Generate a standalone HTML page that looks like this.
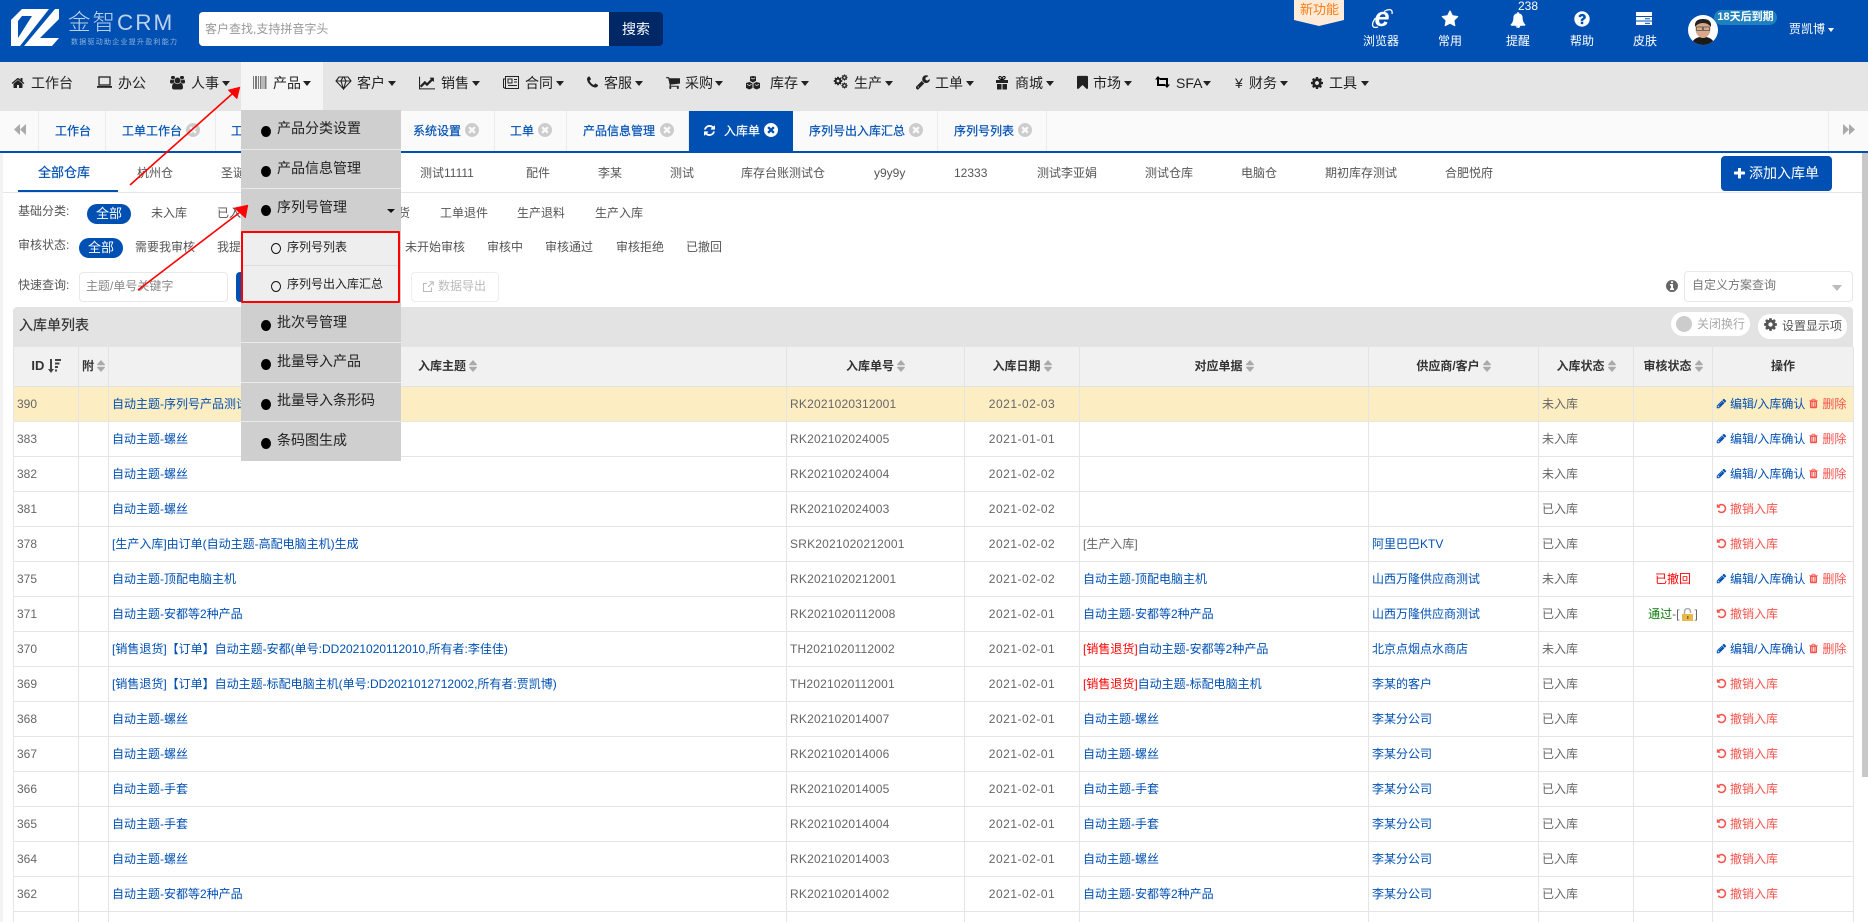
<!DOCTYPE html>
<html lang="zh"><head><meta charset="utf-8"><title>入库单</title>
<style>
*{margin:0;padding:0;box-sizing:border-box}
html,body{width:1868px;height:922px;overflow:hidden}
body{position:relative;background:#fff;font:12px/16px "Liberation Sans","Noto Sans CJK SC",sans-serif;color:#666}
.a,.r>*{position:absolute;white-space:nowrap}
.r{position:absolute;left:0;width:1868px;height:16px}
svg{fill:currentColor}
.nav{color:#222;font-size:14px;line-height:20px;height:20px}
.nav svg{top:3px}
.nav i{top:8px;border-top:5px solid #222;border-left:4px solid transparent;border-right:4px solid transparent}
.tab{position:absolute;top:111px;height:40px;border-right:1px solid #ececec}
.tt{color:#0050b3;-webkit-text-stroke:.2px #0050b3}
.tt svg{top:0;color:#ccc}
.wh{color:#555}
.pill{background:#0050b3;color:#fff;border-radius:10px;text-align:center;height:20px;line-height:19px;font-size:13px}
.hic{color:#fff}
.hic span{font-size:12px}
table{position:absolute;left:13px;top:347px;width:1840px;border-collapse:collapse;table-layout:fixed;color:#666}
th{height:39px;background:#f1f1f1;border:1px solid #e3e3e3;border-top:0;color:#333;font-size:12px;font-weight:700;white-space:nowrap}
th svg{width:8px;height:12px;vertical-align:-2px;margin-left:3px;color:#aaa}
td{height:35px;border:1px solid #e5e5e5;padding:0 3px;white-space:nowrap;overflow:hidden}
tr.h td{background:#fdedc2}
b{font-weight:400;color:#0050b3}
u{text-decoration:none;color:#f00}
em{font-style:normal;color:#f5544d}
.ed svg,.un svg{width:11px;height:11px;vertical-align:-1px;margin-right:3px}
.ed svg{color:#0050b3}
.ed .tr{color:#f5544d;width:11px;margin:0 3px 0 3px}
.un svg{color:#f5544d}
.rk{letter-spacing:.2px}
.dt{text-align:center;letter-spacing:.5px}
.mi{position:absolute;left:36px;font-size:14px;line-height:20px;color:#222;white-space:nowrap}
.dot{position:absolute;left:20px;width:10px;height:11px;border-radius:50%;background:#000}
.sp{position:absolute;left:0;width:160px;height:1px;background:#e9e9e9}
</style></head><body>
<svg width="0" height="0" style="position:absolute"><defs>
<symbol id="home" viewBox="0 0 1792 1792"><path d="M1472 992v480q0 26-19 45t-45 19h-384v-384h-256v384h-384q-26 0-45-19t-19-45v-480q0-1 .5-3t.5-3l575-474 575 474q1 2 1 6zm223-69l-62 74q-8 9-21 11h-3q-13 0-21-7l-692-577-692 577q-12 8-24 7-13-2-21-11l-62-74q-8-10-7-23.5t11-21.5l719-599q32-26 76-26t76 26l244 204v-195q0-14 9-23t23-9h192q14 0 23 9t9 23v408l219 182q10 8 11 21.5t-7 23.5z"/></symbol>
<symbol id="star" viewBox="0 0 1792 1792"><path d="M1728 647q0 22-26 48l-363 354 86 500q1 7 1 20 0 21-10.5 35.5t-30.5 14.5q-19 0-40-12l-449-236-449 236q-22 12-40 12-21 0-31.5-14.5t-10.5-35.5q0-6 2-20l86-500-364-354q-25-27-25-48 0-37 56-46l502-73 225-455q19-41 49-41t49 41l225 455 502 73q56 9 56 46z"/></symbol>
<symbol id="bell" viewBox="0 0 1792 1792"><path d="M912 1696q0-16-16-16-59 0-101.5-42.5t-42.5-101.5q0-16-16-16t-16 16q0 73 51.5 124.5t124.5 51.5q16 0 16-16zm816-288q0 52-38 90t-90 38h-448q0 106-75 181t-181 75-181-75-75-181h-448q-52 0-90-38t-38-90q50-42 91-88t85-119.5 74.5-158.5 50-206 19.5-260q0-152 117-282.5t307-158.5q-8-19-8-39 0-40 28-68t68-28 68 28 28 68q0 20-8 39 190 28 307 158.5t117 282.5q0 139 19.5 260t50 206 74.5 158.5 85 119.5 91 88z"/></symbol>
<symbol id="qu" viewBox="0 0 1792 1792"><path d="M1024 1376v-192q0-14-9-23t-23-9h-192q-14 0-23 9t-9 23v192q0 14 9 23t23 9h192q14 0 23-9t9-23zm256-672q0-88-55.5-163t-138.5-116-170-41q-243 0-371 213-15 24 8 42l132 100q7 6 19 6 16 0 25-12 53-68 86-92 34-24 86-24 48 0 85.5 26t37.5 59q0 38-20 61t-68 45q-63 28-115.5 86.5t-52.5 125.5v36q0 14 9 23t23 9h192q14 0 23-9t9-23q0-19 21.5-49.5t54.5-49.5q32-18 49-28.5t46-35 44.5-48 28-60.5 12.5-81zm384 192q0 209-103 385.5t-279.5 279.5-385.5 103-385.5-103-279.5-279.5-103-385.5 103-385.5 279.5-279.5 385.5-103 385.5 103 279.5 279.5 103 385.5z"/></symbol>
<symbol id="pen" viewBox="0 0 1792 1792"><path d="M491 1536l91-91-235-235-91 91v107h128v128h107zm523-928q0-22-22-22-10 0-17 7l-542 542q-7 7-7 17 0 22 22 22 10 0 17-7l542-542q7-7 7-17zm-54-192l416 416-832 832h-416v-416zm683 96q0 53-37 90l-166 166-416-416 166-165q36-38 90-38 53 0 91 38l235 234q37 39 37 91z"/></symbol>
<symbol id="trash" viewBox="0 0 1792 1792"><path d="M704 1376v-704q0-14-9-23t-23-9h-64q-14 0-23 9t-9 23v704q0 14 9 23t23 9h64q14 0 23-9t9-23zm256 0v-704q0-14-9-23t-23-9h-64q-14 0-23 9t-9 23v704q0 14 9 23t23 9h64q14 0 23-9t9-23zm256 0v-704q0-14-9-23t-23-9h-64q-14 0-23 9t-9 23v704q0 14 9 23t23 9h64q14 0 23-9t9-23zm-544-992h448l-48-117q-7-9-17-11h-317q-10 2-17 11zm928 32v64q0 14-9 23t-23 9h-96v948q0 83-47 143.5t-113 60.5h-832q-66 0-113-58.5t-47-141.5v-952h-96q-14 0-23-9t-9-23v-64q0-14 9-23t23-9h309l70-167q15-37 54-63t79-26h320q40 0 79 26t54 63l70 167h309q14 0 23 9t9 23z"/></symbol>
<symbol id="undo" viewBox="0 0 1792 1792"><path d="M1664 896q0 156-61 298t-164 245-245 164-298 61q-172 0-327-72.500t-264-204.500q-7-10-6.500-22.500t8.500-20.500l137-138q10-9 25-9 16 2 23 12 73 95 179 147t225 52q104 0 198.500-40.500t163.500-109.500 109.500-163.500 40.500-198.500-40.500-198.500-109.500-163.500-163.500-109.500-198.500-40.500q-98 0-188 35.500t-160 101.500l137 138q31 30 14 69-17 40-59 40h-448q-26 0-45-19t-19-45v-448q0-42 40-59 39-17 69 14l130 129q107-101 244.500-156.500t284.500-55.500q156 0 298 61t245 164 164 245 61 298z"/></symbol>
<symbol id="cog" viewBox="0 0 1792 1792"><path d="M1152 896q0-106-75-181t-181-75-181 75-75 181 75 181 181 75 181-75 75-181zm512-109v222q0 12-8 23t-20 13l-185 28q-19 54-39 91 35 50 107 138 10 12 10 25t-9 23q-27 37-99 108t-94 71q-12 0-26-9l-138-108q-44 23-91 38-16 136-29 186-7 28-36 28h-222q-14 0-24.500-8.500t-11.500-21.500l-28-184q-49-16-90-37l-141 107q-10 9-25 9-14 0-25-11-126-114-165-168-7-10-7-23 0-12 8-23 15-21 51-66.500t54-70.500q-27-50-41-99l-183-27q-13-2-21-12.500t-8-23.500v-222q0-12 8-23t19-13l186-28q14-46 39-92-40-57-107-138-10-12-10-24 0-10 9-23 26-36 98.500-107.500t94.500-71.500q13 0 26 10l138 107q44-23 91-38 16-136 29-186 7-28 36-28h222q14 0 24.500 8.500t11.500 21.500l28 184q49 16 90 37l142-107q9-9 24-9 13 0 25 10 129 119 165 170 7 8 7 22 0 12-8 23-15 21-51 66.500t-54 70.500q26 50 41 98l183 28q13 2 21 12.500t8 23.500z"/></symbol>
<symbol id="info" viewBox="0 0 1792 1792"><path d="M1152 1376v-160q0-14-9-23t-23-9h-96v-512q0-14-9-23t-23-9h-320q-14 0-23 9t-9 23v160q0 14 9 23t23 9h96v320h-96q-14 0-23 9t-9 23v160q0 14 9 23t23 9h448q14 0 23-9t9-23zm-128-896v-160q0-14-9-23t-23-9h-192q-14 0-23 9t-9 23v160q0 14 9 23t23 9h192q14 0 23-9t9-23zm640 416q0 209-103 385.500t-279.500 279.500-385.500 103-385.500-103-279.500-279.500-103-385.500 103-385.500 279.500-279.500 385.500-103 385.500 103 279.500 279.500 103 385.500z"/></symbol>
<symbol id="x" viewBox="128 128 1536 1536"><path d="M1277 1122q0-26-19-45l-181-181 181-181q19-19 19-45 0-27-19-46l-90-90q-19-19-46-19-26 0-45 19l-181 181-181-181q-19-19-45-19-27 0-46 19l-90 90q-19 19-19 46 0 26 19 45l181 181-181 181q-19 19-19 45 0 27 19 46l90 90q19 19 46 19 26 0 45-19l181-181 181 181q19 19 45 19 27 0 46-19l90-90q19-19 19-46zm387-226q0 209-103 385.500t-279.500 279.500-385.500 103-385.500-103-279.500-279.500-103-385.500 103-385.500 279.500-279.500 385.500-103 385.500 103 279.500 279.500 103 385.500z"/></symbol>
<symbol id="plus" viewBox="192 192 1408 1408"><path d="M1600 736v192q0 40-28 68t-68 28h-416v416q0 40-28 68t-68 28h-192q-40 0-68-28t-28-68v-416h-416q-40 0-68-28t-28-68v-192q0-40 28-68t68-28h416v-416q0-40 28-68t68-28h192q40 0 68 28t28 68v416h416q40 0 68 28t28 68z"/></symbol>
<symbol id="refresh" viewBox="128 128 1536 1536"><path d="M1639 1056q0 5-1 7-64 268-268 434.500t-478 166.500q-146 0-282.500-55t-243.500-157l-129 129q-19 19-45 19t-45-19-19-45v-448q0-26 19-45t45-19h448q26 0 45 19t19 45-19 45l-137 137q71 66 161 102t187 36q134 0 250-65t186-179q11-17 53-117 8-23 30-23h192q13 0 22.500 9.500t9.500 22.500zm25-800v448q0 26-19 45t-45 19h-448q-26 0-45-19t-19-45 19-45l138-138q-148-137-349-137-134 0-250 65t-186 179q-11 17-53 117-8 23-30 23h-199q-13 0-22.500-9.500t-9.500-22.500v-7q65-268 270-434.500t480-166.500q146 0 284 55.500t245 156.500l130-129q19-19 45-19t45 19 19 45z"/></symbol>
<symbol id="users" viewBox="0 128 1920 1664"><path d="M593 896q-162 5-265 128h-134q-82 0-138-40.500t-56-118.500q0-353 124-353 6 0 43.500 21t97.500 42.500 119 21.500q67 0 133-23-5 37-5 66 0 139 81 256zm1071 637q0 120-73 189.500t-194 69.500h-874q-121 0-194-69.500t-73-189.500q0-53 3.500-103.500t14-109 26.500-108.500 43-97.500 62-81 85.500-53.500 111.500-20q10 0 43 21.500t73 48 107 48 135 21.500 135-21.500 107-48 73-48 43-21.500q61 0 111.500 20t85.500 53.500 62 81 43 97.500 26.500 108.500 14 109 3.500 103.500zm-1024-1277q0 106-75 181t-181 75-181-75-75-181 75-181 181-75 181 75 75 181zm704 384q0 159-112.500 271.500t-271.500 112.500-271.500-112.500-112.500-271.500 112.500-271.500 271.500-112.500 271.500 112.500 112.500 271.500zm576 225q0 78-56 118.500t-138 40.500h-134q-103-123-265-128 81-117 81-256 0-29-5-66 66 23 133 23 59 0 119-21.500t97.500-42.500 43.500-21q124 0 124 353zm-128-609q0 106-75 181t-181 75-181-75-75-181 75-181 181-75 181 75 75 181z"/></symbol>
<symbol id="chart" viewBox="0 128 1920 1536"><path d="M1920 1536v128h-1920v-1536h128v1408h1792zm-128-1248v435q0 21-19.500 29.500t-35.500-7.500l-121-121-633 633q-10 10-23 10t-23-10l-233-233-416 416-192-192 585-585q10-10 23-10t23 10l233 233 464-464-121-121q-16-16-7.500-35.500t29.500-19.500h435q14 0 23 9t9 23z"/></symbol>
<symbol id="phone" viewBox="192 192 1408 1408"><path d="M1600 1240q0 27-10 70.500t-21 68.500q-21 50-122 106-94 51-186 51-27 0-53-3.500t-57.500-12.500-47-14.500-55.500-20.500-49-18q-98-35-175-83-127-79-264-216t-216-264q-48-77-83-175-3-9-18-49t-20.500-55.500-14.500-47-12.500-57.500-3.500-53q0-92 51-186 56-101 106-122 25-11 68.500-21t70.500-10q14 0 21 3 18 6 53 76 11 19 30 54t35 63.500 31 53.500q3 4 17.500 25t21.500 35.500 7 28.500q0 20-28.500 50t-62 55-62 53-28.500 46q0 9 5 22.500t8.500 20.500 14 24 11.500 19q76 137 174 235t235 174q2 1 19 11.500t24 14 20.500 8.500 22.500 5q18 0 46-28.500t53-62 55-62 50-28.500q14 0 28.500 7t35.500 21.500 25 17.500q25 15 53.500 31t63.500 35 54 30q70 35 76 53 3 7 3 21z"/></symbol>
<symbol id="cart" viewBox="64 128 1664 1536"><path d="M704 1536q0 52-38 90t-90 38-90-38-38-90 38-90 90-38 90 38 38 90zm896 0q0 52-38 90t-90 38-90-38-38-90 38-90 90-38 90 38 38 90zm128-1088v512q0 24-16.500 42.500t-40.500 21.500l-1044 122q13 60 13 70 0 16-24 64h920q26 0 45 19t19 45-19 45-45 19h-1024q-26 0-45-19t-19-45q0-11 8-31.500t16-36 21.500-40 15.500-29.500l-177-823h-204q-26 0-45-19t-19-45 19-45 45-19h256q16 0 28.500 6.500t19.500 15.500 13 24.500 8 26 5.500 29.500 4.500 26h1201q26 0 45 19t19 45z"/></symbol>
<symbol id="wrench" viewBox="128 128 1600 1664"><path d="M448 1472q0-26-19-45t-45-19-45 19-19 45 19 45 45 19 45-19 19-45zm644-420l-682 682q-37 37-90 37-52 0-91-37l-106-108q-38-36-38-90 0-53 38-91l681-681q39 98 114.500 173.500t173.500 114.500zm634-435q0 39-23 106-47 134-164.500 217.500t-258.500 83.500q-185 0-316.500-131.500t-131.500-316.500 131.500-316.500 316.500-131.500q58 0 121.500 16.500t107.500 46.500q16 11 16 28t-16 28l-293 169v224l193 107q5-3 79-48.500t135.500-81 70.500-35.500q15 0 23.500 10t8.500 25z"/></symbol>
<symbol id="mark" viewBox="256 128 1280 1536"><path d="M1420 128q23 0 44 9 33 13 52.500 41t19.500 62v1289q0 34-19.500 62t-52.500 41q-19 8-44 8-48 0-83-32l-441-424-441 424q-36 33-83 33-23 0-44-9-33-13-52.500-41t-19.500-62v-1289q0-34 19.500-62t52.500-41q21-9 44-9h1048z"/></symbol>
<symbol id="sort" viewBox="0 0 8 12"><path d="M4 0L8 4.500Q8 5.300 7 5.300H1Q0 5.300 0 4.500zM4 12L8 7.500Q8 6.700 7 6.700H1Q0 6.700 0 7.500z"/></symbol>
</defs></svg>

<!-- header -->
<div class="a" style="left:0;top:0;width:1868px;height:62px;background:#0050b3"></div>
<svg class="a" style="left:10px;top:8px" width="52" height="40" viewBox="10 8 52 40"><path fill="#fff" fill-rule="evenodd" d="M11 20L22 9H49L20 46H11zM18 21V38L32 16H22z"/><path fill="#fff" d="M55 9H59V19L40 38H59L52 46H24z"/></svg>
<div class="a" style="left:68px;top:8px;font-size:22.500px;line-height:30px;color:#bcd2ea;font-weight:300;letter-spacing:2px">金智CRM</div>
<div class="a" style="left:71px;top:38px;font-size:7px;line-height:10px;letter-spacing:1.250px;color:#8fb2da">数据驱动助企业提升盈利能力</div>
<div class="a" style="left:199px;top:12px;width:410px;height:34px;background:#fff;border-radius:4px 0 0 4px;padding-left:6px;font-size:12px;line-height:34px;color:#999">客户查找,支持拼音字头</div>
<div class="a" style="left:609px;top:12px;width:54px;height:34px;background:#002766;border-radius:0 4px 4px 0;color:#fff;font-size:14px;line-height:34px;text-align:center">搜索</div>
<svg class="a" style="left:1294px;top:0" width="50" height="26"><polygon points="0,0 50,0 50,20 25,26 0,20" fill="#fdebd9"/></svg>
<div class="a" style="left:1300px;top:1px;font-size:13px;line-height:18px;color:#fa7d14">新功能</div>
<div class="hic">
<svg class="a" style="left:1371px;top:8px" width="22" height="21" viewBox="0 0 22 21"><path d="M4.500 10C0 16 .5 21 7 19M13 3.500C18 .5 22 1 21 6" fill="none" stroke="#fff" stroke-width="1.300"/><text x="11" y="18" text-anchor="middle" font-family="Liberation Sans" font-weight="700" font-style="italic" font-size="27" fill="#fff">e</text></svg>
<span class="a" style="left:1363px;top:33px">浏览器</span>
<svg class="a" style="left:1441px;top:10px" width="18" height="18"><use href="#star"/></svg>
<span class="a" style="left:1438px;top:33px">常用</span>
<svg class="a" style="left:1510px;top:12px" width="16" height="16"><use href="#bell"/></svg>
<span class="a" style="left:1518px;top:-1px;line-height:14px">238</span>
<span class="a" style="left:1506px;top:33px">提醒</span>
<svg class="a" style="left:1573px;top:10px" width="18" height="18"><use href="#qu"/></svg>
<span class="a" style="left:1570px;top:33px">帮助</span>
<svg class="a" style="left:1636px;top:12px" width="16" height="14"><rect width="16" height="4" y="0" fill="#fff"/><rect width="16" height="3.500" y="5" fill="#fff"/><rect width="16" height="3.500" y="9.500" fill="#fff"/><rect x="9" y="6.300" width="5" height="1" fill="#0050b3"/><rect x="9" y="10.800" width="5" height="1" fill="#0050b3"/></svg>
<span class="a" style="left:1633px;top:33px">皮肤</span>
</div>
<svg class="a" style="left:1688px;top:15px" width="30" height="30" viewBox="0 0 30 30"><defs><clipPath id="av"><circle cx="15" cy="15" r="15"/></clipPath></defs><g clip-path="url(#av)"><rect width="30" height="30" fill="#fff"/><path d="M3 30Q5 23 12 22H18Q25 23 27 30z" fill="#1a1a1a"/><ellipse cx="15" cy="14" rx="7.500" ry="9" fill="#d9a888"/><path d="M7 12Q6 4 15 4T23 12Q20 8 15 8T7 12z" fill="#222"/><rect x="8.500" y="12" width="6" height="3.500" fill="none" stroke="#555" stroke-width=".8"/><rect x="15.500" y="12" width="6" height="3.500" fill="none" stroke="#555" stroke-width=".8"/></g></svg>
<div class="a" style="left:1714px;top:10px;width:63px;height:15px;border-radius:8px;background:#1f80bf;color:#fff;font-size:11px;font-weight:700;line-height:15px;text-align:center">18天后到期</div>
<div class="a" style="left:1789px;top:21px;color:#fff;font-size:12px">贾凯博</div>
<i class="a" style="left:1828px;top:28px;border-top:4px solid #fff;border-left:3.500px solid transparent;border-right:3.500px solid transparent"></i>

<!-- nav -->
<div class="a" style="left:0;top:62px;width:1868px;height:49px;background:#e5e5e5"></div>
<div class="a" style="left:241px;top:62px;width:82px;height:49px;background:#f5f5f5"></div>
<div class="r nav" style="top:73px">
<svg style="left:11px" width="14" height="14"><use href="#home"/></svg><span style="left:31px">工作台</span>
<svg style="left:97px;fill:none" width="15" height="13" viewBox="0 0 15 13"><rect x="2" y="1" width="11" height="8" fill="none" stroke="#222" stroke-width="1.300"/><rect x="0" y="10" width="15" height="1.800" fill="#222"/></svg><span style="left:118px">办公</span>
<svg style="left:170px" width="15" height="14"><use href="#users"/></svg><span style="left:191px">人事</span><i style="left:222px"></i>
<svg style="left:253px" width="14" height="13" viewBox="0 0 14 13"><g fill="#7a7a7a"><rect width="1" height="13"/><rect x="2" width="2" height="13"/><rect x="5" width="1" height="13"/><rect x="7" width="1.500" height="13"/><rect x="9.500" width="1" height="13"/><rect x="11.500" width="2" height="13"/></g></svg><span style="left:273px">产品</span><i style="left:303px"></i>
<svg style="left:335px;fill:none" width="17" height="14" viewBox="0 0 17 14" stroke="#222" stroke-width="1.100"><path d="M4 1H13L16 5L8.500 13L1 5zM1 5H16M6 5L8.500 13L11 5M6 5L8 1M11 5L9 1"/></svg><span style="left:357px">客户</span><i style="left:388px"></i>
<svg style="left:419px" width="16" height="14"><use href="#chart"/></svg><span style="left:441px">销售</span><i style="left:472px"></i>
<svg style="left:503px;fill:none" width="16" height="13" viewBox="0 0 16 13" stroke="#222"><rect x="2.500" y=".5" width="13" height="12"/><path d="M2.500 3H.5V11.500L2.500 12.500M5 3H9V7H5zM11 3.500H14M11 6H14M5 9.500H14"/></svg><span style="left:525px">合同</span><i style="left:556px"></i>
<svg style="left:587px" width="11" height="13"><use href="#phone"/></svg><span style="left:604px">客服</span><i style="left:635px"></i>
<svg style="left:666px" width="14" height="13"><use href="#cart"/></svg><span style="left:685px">采购</span><i style="left:715px"></i>
<svg style="left:746px" width="14" height="14" viewBox="0 0 14 14"><path d="M4 0.500L7 0L10 .5V5L7 6.500L4 5zM0 7L3.500 6L6.500 7.500V12L3.500 13.500L0 12zM7.500 7.500L10.500 6L14 7V12L10.500 13.500L7.500 12z"/><path d="M5 2L7 3L9 2M1 8.500L3.500 9.500L5.500 8.500M9 8.500L10.500 9.500L13 8.500" stroke="#e5e5e5" stroke-width=".7" fill="none"/></svg><span style="left:770px">库存</span><i style="left:801px"></i>
<svg style="left:833px" width="10" height="10"><use href="#cog"/></svg><svg style="left:841px;top:1px" width="7" height="7"><use href="#cog"/></svg><svg style="left:841px;top:9px" width="7" height="7"><use href="#cog"/></svg><span style="left:854px">生产</span><i style="left:885px"></i>
<svg style="left:916px;top:2px" width="14" height="15"><use href="#wrench"/></svg><span style="left:935px">工单</span><i style="left:966px"></i>
<svg style="left:996px" width="12" height="14" viewBox="0 0 12 14"><rect y="4" width="12" height="3"/><rect x="1" y="8" width="4.500" height="5.500"/><rect x="6.500" y="8" width="4.500" height="5.500"/><path d="M6 3.500C3 3.500 2 1 3.500 .5S6 2 6 3.500C6 2 7 0 8.500 .5S9 3.500 6 3.500z" fill="none" stroke="#000"/></svg><span style="left:1015px">商城</span><i style="left:1046px"></i>
<svg style="left:1077px;top:2px" width="11" height="15"><use href="#mark"/></svg><span style="left:1093px">市场</span><i style="left:1124px"></i>
<svg style="left:1155px;fill:none" width="15" height="12" viewBox="0 0 15 12" stroke="#000" stroke-width="2"><path d="M3 2V9H10M12 10V3H5"/><path d="M0 3.500L3 0L6 3.500zM9 8.500L12 12L15 8.500z" fill="#000" stroke="none"/></svg><span style="left:1176px">SFA</span><i style="left:1203px"></i>
<span style="left:1235px">¥</span><span style="left:1249px">财务</span><i style="left:1280px"></i>
<svg style="left:1310px" width="14" height="14"><use href="#cog"/></svg><span style="left:1329px">工具</span><i style="left:1361px"></i>
</div>

<!-- tabs -->
<div class="a" style="left:0;top:111px;width:1868px;height:40px;background:#fafafa"></div>
<div class="a" style="left:0;top:151px;width:1868px;height:2px;background:#0050b3"></div>
<div class="tab" style="left:0;width:39px"></div><div class="tab" style="left:39px;width:67px"></div><div class="tab" style="left:106px;width:110px"></div>
<div class="tab" style="left:401px;width:94px"></div><div class="tab" style="left:495px;width:72px"></div><div class="tab" style="left:567px;width:122px"></div>
<div class="tab" style="left:793px;width:145px"></div><div class="tab" style="left:938px;width:109px"></div>
<div class="a" style="left:1828px;top:111px;width:1px;height:40px;background:#ececec"></div>
<div class="a" style="left:689px;top:111px;width:104px;height:42px;background:#0050b3"></div>
<svg class="a" style="left:14px;top:124px;color:#aaa" width="12" height="11" viewBox="0 0 12 11"><path d="M6 0V11L0 5.500zM12 0V11L6 5.500z"/></svg>
<svg class="a" style="left:1843px;top:124px;color:#aaa" width="12" height="11" viewBox="0 0 12 11"><path d="M0 0V11L6 5.500zM6 0V11L12 5.500z"/></svg>
<div class="r tt" style="top:123px">
<span style="left:55px">工作台</span>
<span style="left:122px">工单工作台</span><svg style="left:186px" width="14" height="14"><use href="#x"/></svg>
<span style="left:231px">工单</span>
<span style="left:413px">系统设置</span><svg style="left:465px" width="14" height="14"><use href="#x"/></svg>
<span style="left:510px">工单</span><svg style="left:538px" width="14" height="14"><use href="#x"/></svg>
<span style="left:583px">产品信息管理</span><svg style="left:660px" width="14" height="14"><use href="#x"/></svg>
<span style="left:809px">序列号出入库汇总</span><svg style="left:909px" width="14" height="14"><use href="#x"/></svg>
<span style="left:954px">序列号列表</span><svg style="left:1018px" width="14" height="14"><use href="#x"/></svg>
<svg style="left:704px;color:#fff;top:2px" width="11" height="11"><use href="#refresh"/></svg><span style="left:724px;color:#fff;-webkit-text-stroke:.2px #fff">入库单</span><svg style="left:764px;color:#fff" width="14" height="14"><use href="#x"/></svg>
</div>

<!-- left strip / scrollbar -->
<div class="a" style="left:0;top:153px;width:3px;height:769px;background:#f3f3f3"></div>
<div class="a" style="left:1862px;top:153px;width:6px;height:624px;background:#c8c8c8"></div>

<!-- warehouse tabs -->
<div class="a" style="left:3px;top:192px;width:1859px;height:1px;background:#e6e6e6"></div>
<div class="a" style="left:18px;top:190px;width:100px;height:2px;background:#0050b3"></div>
<div class="r wh" style="top:165px">
<span class="tt" style="left:38px;font-size:13px">全部仓库</span>
<span style="left:137px">杭州仓</span><span style="left:221px">圣诞仓</span>
<span style="left:420px">测试11111</span><span style="left:526px">配件</span><span style="left:598px">李某</span><span style="left:670px">测试</span>
<span style="left:741px">库存台账测试仓</span><span style="left:874px">y9y9y</span><span style="left:954px">12333</span>
<span style="left:1037px">测试李亚娟</span><span style="left:1145px">测试仓库</span><span style="left:1241px">电脑仓</span>
<span style="left:1325px">期初库存测试</span><span style="left:1445px">合肥悦府</span>
</div>
<div class="a" style="left:1721px;top:156px;width:111px;height:35px;background:#0050b3;border-radius:4px"></div>
<svg class="a" style="left:1734px;top:168px;color:#fff" width="11" height="11"><use href="#plus"/></svg>
<div class="a" style="left:1749px;top:164px;color:#fff;font-size:14px;line-height:18px">添加入库单</div>

<!-- filters -->
<div class="r wh" style="top:203px"><span style="left:18px">基础分类:</span></div>
<div class="a pill" style="left:87px;top:204px;width:44px">全部</div>
<div class="r wh" style="top:205px"><span style="left:151px">未入库</span><span style="left:217px">已入库</span><span style="left:362px">销售退货</span><span style="left:440px">工单退件</span><span style="left:517px">生产退料</span><span style="left:595px">生产入库</span></div>
<div class="r wh" style="top:237px"><span style="left:18px">审核状态:</span></div>
<div class="a pill" style="left:79px;top:238px;width:44px">全部</div>
<div class="r wh" style="top:239px"><span style="left:135px">需要我审核</span><span style="left:217px">我提交的</span><span style="left:405px">未开始审核</span><span style="left:487px">审核中</span><span style="left:545px">审核通过</span><span style="left:616px">审核拒绝</span><span style="left:686px">已撤回</span></div>
<div class="r wh" style="top:277px"><span style="left:18px">快速查询:</span></div>
<div class="a" style="left:79px;top:272px;width:149px;height:30px;border:1px solid #e8e8e8;border-radius:4px;padding-left:6px;line-height:26px;color:#888">主题/单号关键字</div>
<div class="a" style="left:236px;top:272px;width:30px;height:30px;background:#0050b3;border-radius:4px"></div>
<div class="a" style="left:411px;top:272px;width:88px;height:30px;border:1px solid #eee;border-radius:4px"></div>
<svg class="a" style="left:423px;top:281px;fill:none" width="11" height="11" viewBox="0 0 11 11" stroke="#bbb" stroke-width="1.100"><path d="M8.500 6.500V10.500H.5V2.500H4M5 6L10 1M6.500 .8H10.200V4.500"/></svg>
<div class="a" style="left:438px;top:278px;color:#bbb">数据导出</div>
<svg class="a" style="left:1666px;top:280px;color:#666" width="12" height="12" viewBox="128 128 1536 1536"><use href="#info" width="1792" height="1792"/></svg>
<div class="a" style="left:1684px;top:271px;width:169px;height:31px;border:1px solid #e8e8e8;border-radius:4px;padding-left:7px;line-height:27px;color:#777">自定义方案查询</div>
<i class="a" style="left:1832px;top:285px;border-top:6px solid #bbb;border-left:5px solid transparent;border-right:5px solid transparent"></i>

<!-- panel -->
<div class="a" style="left:13px;top:307px;width:1840px;height:40px;background:#e3e3e3;border-radius:4px 4px 0 0"></div>
<div class="a" style="left:19px;top:316px;font-size:14px;line-height:18px;color:#333;-webkit-text-stroke:.2px #333">入库单列表</div>
<div class="a" style="left:1671px;top:312px;width:79px;height:24px;background:#fff;border-radius:12px"></div>
<div class="a" style="left:1676px;top:316px;width:16px;height:16px;background:#ccc;border-radius:50%"></div>
<div class="a" style="left:1697px;top:316px;color:#aaa">关闭换行</div>
<div class="a" style="left:1758px;top:314px;width:89px;height:25px;background:#fff;border-radius:12px"></div>
<svg class="a" style="left:1763px;top:317px;color:#555" width="15" height="15"><use href="#cog"/></svg>
<div class="a" style="left:1782px;top:318px;color:#555">设置显示项</div>

<table>
<colgroup><col style="width:65px"><col style="width:30px"><col style="width:678px"><col style="width:178px"><col style="width:115px"><col style="width:289px"><col style="width:170px"><col style="width:95px"><col style="width:79px"><col style="width:141px"></colgroup>
<tr><th><span style="font-size:13px">ID</span> <svg style="width:13px;height:14px;vertical-align:-3px;margin-left:0;color:#444" viewBox="0 0 13 14"><path d="M2 0H4V10H6L3 14L0 10H2zM7 0H13V2H7zM7 3.500H11.500V5.500H7zM7 7H10V9H7zM7 10.500H9V12.500H7z"/></svg></th><th>附<svg><use href="#sort"/></svg></th><th>入库主题<svg><use href="#sort"/></svg></th><th>入库单号<svg><use href="#sort"/></svg></th><th>入库日期<svg><use href="#sort"/></svg></th><th>对应单据<svg><use href="#sort"/></svg></th><th>供应商/客户<svg><use href="#sort"/></svg></th><th>入库状态<svg><use href="#sort"/></svg></th><th>审核状态<svg><use href="#sort"/></svg></th><th>操作</th></tr>
<tr class="h"><td>390</td><td></td><td><b>自动主题-序列号产品测试</b></td><td class="rk">RK2021020312001</td><td class="dt">2021-02-03</td><td></td><td></td><td>未入库</td><td></td><td class="ed"><svg><use href="#pen"/></svg><b>编辑/入库确认</b><svg class="tr"><use href="#trash"/></svg><em>删除</em></td></tr>
<tr><td>383</td><td></td><td><b>自动主题-螺丝</b></td><td class="rk">RK202102024005</td><td class="dt">2021-01-01</td><td></td><td></td><td>未入库</td><td></td><td class="ed"><svg><use href="#pen"/></svg><b>编辑/入库确认</b><svg class="tr"><use href="#trash"/></svg><em>删除</em></td></tr>
<tr><td>382</td><td></td><td><b>自动主题-螺丝</b></td><td class="rk">RK202102024004</td><td class="dt">2021-02-02</td><td></td><td></td><td>未入库</td><td></td><td class="ed"><svg><use href="#pen"/></svg><b>编辑/入库确认</b><svg class="tr"><use href="#trash"/></svg><em>删除</em></td></tr>
<tr><td>381</td><td></td><td><b>自动主题-螺丝</b></td><td class="rk">RK202102024003</td><td class="dt">2021-02-02</td><td></td><td></td><td>已入库</td><td></td><td class="un"><svg><use href="#undo"/></svg><em>撤销入库</em></td></tr>
<tr><td>378</td><td></td><td><b>[生产入库]由订单(自动主题-高配电脑主机)生成</b></td><td class="rk">SRK2021020212001</td><td class="dt">2021-02-02</td><td>[生产入库]</td><td><b>阿里巴巴KTV</b></td><td>已入库</td><td></td><td class="un"><svg><use href="#undo"/></svg><em>撤销入库</em></td></tr>
<tr><td>375</td><td></td><td><b>自动主题-顶配电脑主机</b></td><td class="rk">RK2021020212001</td><td class="dt">2021-02-02</td><td><b>自动主题-顶配电脑主机</b></td><td><b>山西万隆供应商测试</b></td><td>未入库</td><td style="text-align:center"><u>已撤回</u></td><td class="ed"><svg><use href="#pen"/></svg><b>编辑/入库确认</b><svg class="tr"><use href="#trash"/></svg><em>删除</em></td></tr>
<tr><td>371</td><td></td><td><b>自动主题-安都等2种产品</b></td><td class="rk">RK2021020112008</td><td class="dt">2021-02-01</td><td><b>自动主题-安都等2种产品</b></td><td><b>山西万隆供应商测试</b></td><td>已入库</td><td style="text-align:center"><span style="color:#0a7a0a">通过</span>-[<svg width="11" height="13" viewBox="0 0 11 13" style="vertical-align:-3px;margin:0 2px"><path d="M2.500 7V3.500a3 3 0 0 1 6 0V5" fill="none" stroke="#aaa" stroke-width="1.500"/><rect x="0" y="6" width="11" height="7" fill="#e8b84a"/><rect x="5" y="8" width="1.500" height="3" fill="#8a6a20"/></svg>]</td><td class="un"><svg><use href="#undo"/></svg><em>撤销入库</em></td></tr>
<tr><td>370</td><td></td><td><b>[销售退货]【订单】自动主题-安都(单号:DD2021020112010,所有者:李佳佳)</b></td><td class="rk">TH2021020112002</td><td class="dt">2021-02-01</td><td><u>[销售退货]</u><b>自动主题-安都等2种产品</b></td><td><b>北京点烟点水商店</b></td><td>未入库</td><td></td><td class="ed"><svg><use href="#pen"/></svg><b>编辑/入库确认</b><svg class="tr"><use href="#trash"/></svg><em>删除</em></td></tr>
<tr><td>369</td><td></td><td><b>[销售退货]【订单】自动主题-标配电脑主机(单号:DD2021012712002,所有者:贾凯博)</b></td><td class="rk">TH2021020112001</td><td class="dt">2021-02-01</td><td><u>[销售退货]</u><b>自动主题-标配电脑主机</b></td><td><b>李某的客户</b></td><td>已入库</td><td></td><td class="un"><svg><use href="#undo"/></svg><em>撤销入库</em></td></tr>
<tr><td>368</td><td></td><td><b>自动主题-螺丝</b></td><td class="rk">RK202102014007</td><td class="dt">2021-02-01</td><td><b>自动主题-螺丝</b></td><td><b>李某分公司</b></td><td>已入库</td><td></td><td class="un"><svg><use href="#undo"/></svg><em>撤销入库</em></td></tr>
<tr><td>367</td><td></td><td><b>自动主题-螺丝</b></td><td class="rk">RK202102014006</td><td class="dt">2021-02-01</td><td><b>自动主题-螺丝</b></td><td><b>李某分公司</b></td><td>已入库</td><td></td><td class="un"><svg><use href="#undo"/></svg><em>撤销入库</em></td></tr>
<tr><td>366</td><td></td><td><b>自动主题-手套</b></td><td class="rk">RK202102014005</td><td class="dt">2021-02-01</td><td><b>自动主题-手套</b></td><td><b>李某分公司</b></td><td>已入库</td><td></td><td class="un"><svg><use href="#undo"/></svg><em>撤销入库</em></td></tr>
<tr><td>365</td><td></td><td><b>自动主题-手套</b></td><td class="rk">RK202102014004</td><td class="dt">2021-02-01</td><td><b>自动主题-手套</b></td><td><b>李某分公司</b></td><td>已入库</td><td></td><td class="un"><svg><use href="#undo"/></svg><em>撤销入库</em></td></tr>
<tr><td>364</td><td></td><td><b>自动主题-螺丝</b></td><td class="rk">RK202102014003</td><td class="dt">2021-02-01</td><td><b>自动主题-螺丝</b></td><td><b>李某分公司</b></td><td>已入库</td><td></td><td class="un"><svg><use href="#undo"/></svg><em>撤销入库</em></td></tr>
<tr><td>362</td><td></td><td><b>自动主题-安都等2种产品</b></td><td class="rk">RK202102014002</td><td class="dt">2021-02-01</td><td><b>自动主题-安都等2种产品</b></td><td><b>李某分公司</b></td><td>已入库</td><td></td><td class="un"><svg><use href="#undo"/></svg><em>撤销入库</em></td></tr>
<tr><td></td><td></td><td></td><td></td><td></td><td></td><td></td><td></td><td></td><td></td></tr>
</table>

<!-- dropdown menu -->
<div class="a" style="left:241px;top:110px;width:160px;height:351px;background:#cfcfcf">
<div class="mi" style="top:8px">产品分类设置</div><i class="dot" style="top:16px"></i><div class="sp" style="top:39px"></div>
<div class="mi" style="top:48px">产品信息管理</div><i class="dot" style="top:56px"></i><div class="sp" style="top:78px"></div>
<div class="mi" style="top:87px">序列号管理</div><i class="dot" style="top:95px"></i>
<i class="a" style="left:146px;top:99px;border-top:4px solid #111;border-left:4px solid transparent;border-right:4px solid transparent"></i>
<div class="a" style="left:0;top:121px;width:159px;height:72px;background:#eee;border:2px solid #f00;border-radius:1px"></div>
<div class="sp" style="left:2px;top:155px;width:155px;background:#ddd"></div>
<i class="a" style="left:30px;top:133px;width:10px;height:11px;border:1.500px solid #111;border-radius:50%"></i><div class="a" style="left:46px;top:129px;color:#222;font-size:12px">序列号列表</div>
<i class="a" style="left:30px;top:171px;width:10px;height:11px;border:1.500px solid #111;border-radius:50%"></i><div class="a" style="left:46px;top:166px;color:#222;font-size:12px">序列号出入库汇总</div>
<div class="mi" style="top:202px">批次号管理</div><i class="dot" style="top:210px"></i><div class="sp" style="top:232px"></div>
<div class="mi" style="top:241px">批量导入产品</div><i class="dot" style="top:249px"></i><div class="sp" style="top:272px"></div>
<div class="mi" style="top:280px">批量导入条形码</div><i class="dot" style="top:289px"></i><div class="sp" style="top:311px"></div>
<div class="mi" style="top:320px">条码图生成</div><i class="dot" style="top:328px"></i>
</div>

<!-- arrows -->
<svg class="a" style="left:0;top:0" width="1868" height="922"><g fill="#f00" stroke="#f00"><line x1="130" y1="185" x2="232" y2="94" stroke-width="1.600"/><polygon points="240,87 228,90 237,99" stroke-width=".5"/><line x1="138" y1="290" x2="239" y2="213" stroke-width="1.600"/><polygon points="248,205 234,208 245.500,218" stroke-width=".5"/></g></svg>
</body></html>
